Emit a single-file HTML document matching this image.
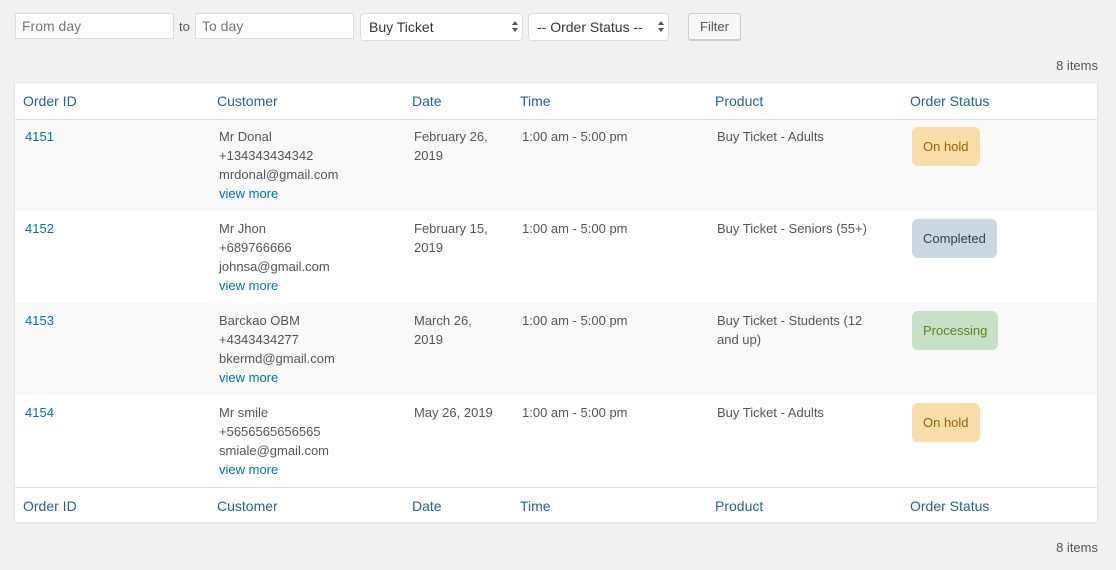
<!DOCTYPE html>
<html><head><style>
body{margin:0;width:1116px;height:570px;background:#f1f1f1;font-family:"Liberation Sans",sans-serif;font-size:13px;color:#555;position:relative;overflow:hidden}
.a{position:absolute}
input,.sel,.btn{position:absolute;box-sizing:border-box;background:#fff;border:1px solid #ddd;font-size:14px;font-family:"Liberation Sans",sans-serif;color:#777;padding:0 6px;line-height:24px;height:26px}
.sel{color:#32373c;border-radius:4px;border-color:#ddd;height:28px;line-height:26px;padding-left:8px}
.sel:after{content:"";position:absolute;right:4px;top:7px;width:0;height:0;border:3px solid transparent;border-bottom:4px solid #555;border-top:0}
.sel:before{content:"";position:absolute;right:4px;top:14px;width:0;height:0;border:3px solid transparent;border-top:4px solid #555;border-bottom:0}
.btn{background:#f7f7f7;border:1px solid #ccc;border-radius:3px;color:#555;font-size:13px;box-shadow:0 1px 0 #ccc;text-align:center;padding:0}
.tbl{left:14px;top:82px;width:1084px;height:441px;background:#fff;border:1px solid #e5e5e5;box-sizing:border-box;box-shadow:0 1px 1px rgba(0,0,0,.04)}
.h{color:#23648d;font-size:14px}
a{color:#0073aa;text-decoration:none}
.row{position:absolute;left:0;width:1082px;height:92px}
.c{position:absolute;top:8px;line-height:19px}
.b{position:absolute;left:897px;top:8px;height:39px;line-height:39px;border-radius:6px;padding:0 11px;font-size:13px}
.oh{background:#f8dda7;color:#94660c}.co{background:#c8d7e1;color:#2e4453}.pr{background:#c6e1c6;color:#5b841b}
</style></head><body>
<input class="a" style="left:15px;top:13px;width:159px" value="" placeholder="From day">
<span class="a" style="left:179px;top:19px;color:#555">to</span>
<input class="a" style="left:195px;top:13px;width:159px" placeholder="To day">
<div class="sel" style="left:360px;top:13px;width:163px">Buy Ticket</div>
<div class="sel" style="left:528px;top:13px;width:141px">-- Order Status --</div>
<div class="btn" style="left:688px;top:13px;width:53px;height:27px;line-height:25px">Filter</div>
<div class="a" style="right:18px;top:58px;color:#555">8 items</div>
<div class="a tbl">
<div class="a" style="left:0;top:0;width:1082px;height:36px;border-bottom:1px solid #e1e1e1;z-index:2"></div>
<div class="a h" style="left:8px;top:10px">Order ID</div><div class="a h" style="left:202px;top:10px">Customer</div><div class="a h" style="left:397px;top:10px">Date</div><div class="a h" style="left:505px;top:10px">Time</div><div class="a h" style="left:700px;top:10px">Product</div><div class="a h" style="left:895px;top:10px">Order Status</div>

<div class="row" style="top:36px;background:#f9f9f9">
<div class="c" style="left:10px"><a>4151</a></div>
<div class="c" style="left:204px">Mr Donal<br>+134343434342<br>mrdonal@gmail.com<br><a>view more</a></div>
<div class="c" style="left:399px">February 26,<br>2019</div>
<div class="c" style="left:507px">1:00 am - 5:00 pm</div>
<div class="c" style="left:702px">Buy Ticket - Adults</div>
<div class="b oh">On hold</div></div>

<div class="row" style="top:128px;background:#fff">
<div class="c" style="left:10px"><a>4152</a></div>
<div class="c" style="left:204px">Mr Jhon<br>+689766666<br>johnsa@gmail.com<br><a>view more</a></div>
<div class="c" style="left:399px">February 15,<br>2019</div>
<div class="c" style="left:507px">1:00 am - 5:00 pm</div>
<div class="c" style="left:702px">Buy Ticket - Seniors (55+)</div>
<div class="b co">Completed</div></div>

<div class="row" style="top:220px;background:#f9f9f9">
<div class="c" style="left:10px"><a>4153</a></div>
<div class="c" style="left:204px">Barckao OBM<br>+4343434277<br>bkermd@gmail.com<br><a>view more</a></div>
<div class="c" style="left:399px">March 26,<br>2019</div>
<div class="c" style="left:507px">1:00 am - 5:00 pm</div>
<div class="c" style="left:702px">Buy Ticket - Students (12<br>and up)</div>
<div class="b pr">Processing</div></div>

<div class="row" style="top:312px;background:#fff">
<div class="c" style="left:10px"><a>4154</a></div>
<div class="c" style="left:204px">Mr smile<br>+5656565656565<br>smiale@gmail.com<br><a>view more</a></div>
<div class="c" style="left:399px">May 26, 2019</div>
<div class="c" style="left:507px">1:00 am - 5:00 pm</div>
<div class="c" style="left:702px">Buy Ticket - Adults</div>
<div class="b oh">On hold</div></div>

<div class="a" style="left:0;top:404px;width:1082px;height:35px;border-top:1px solid #e1e1e1"></div>
<div class="a h" style="left:8px;top:415px">Order ID</div><div class="a h" style="left:202px;top:415px">Customer</div><div class="a h" style="left:397px;top:415px">Date</div><div class="a h" style="left:505px;top:415px">Time</div><div class="a h" style="left:700px;top:415px">Product</div><div class="a h" style="left:895px;top:415px">Order Status</div>
</div>
<div class="a" style="right:18px;top:540px;color:#555">8 items</div>
</body></html>
